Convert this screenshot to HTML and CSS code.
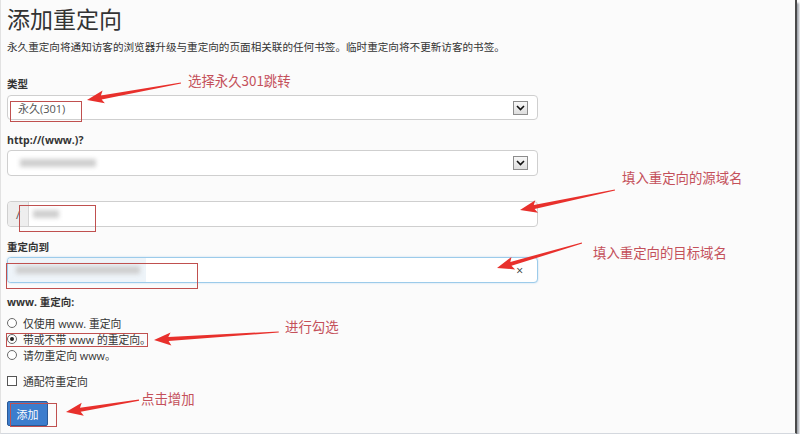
FILE: index.html
```html
<!DOCTYPE html>
<html lang="zh-CN">
<head>
<meta charset="utf-8">
<title>添加重定向</title>
<link rel="stylesheet" href="styles.css">
</head>
<body>
<div class="frame">
  <div class="page">
    <h1 class="title">添加重定向</h1>
    <p class="desc">永久重定向将通知访客的浏览器升级与重定向的页面相关联的任何书签。临时重定向将不更新访客的书签。</p>

    <div class="field f-type">
      <span class="lbl">类型</span>
      <div class="select s-type">
        <span class="val">永久(301)</span>
        <span class="dd"><svg width="9" height="6" viewBox="0 0 9 6"><path d="M1 1 L4.5 4.5 L8 1" fill="none" stroke="#111" stroke-width="1.6"/></svg></span>
      </div>
    </div>

    <div class="field f-domain">
      <span class="lbl">http://(www.)?</span>
      <div class="select s-domain">
        <span class="blur b-domain"></span>
        <span class="dd"><svg width="9" height="6" viewBox="0 0 9 6"><path d="M1 1 L4.5 4.5 L8 1" fill="none" stroke="#111" stroke-width="1.6"/></svg></span>
      </div>
    </div>

    <div class="input i-path">
      <span class="addon">/</span>
      <span class="blur b-path"></span>
    </div>

    <div class="field f-target">
      <span class="lbl">重定向到</span>
      <div class="input i-target">
        <span class="tint"><span class="blur b-target"></span></span>
        <span class="clear">×</span>
      </div>
    </div>

    <div class="field f-www">
      <span class="lbl">www. 重定向:</span>
      <div class="radios">
        <div class="opt"><span class="radio"></span>仅使用 www. 重定向</div>
        <div class="opt"><span class="radio on"></span>带或不带 www 的重定向。</div>
        <div class="opt"><span class="radio"></span>请勿重定向 www。</div>
      </div>
    </div>

    <div class="opt chk-row"><span class="check"></span>通配符重定向</div>

    <button class="btn">添加</button>
  </div>

  <svg class="arrows" width="796" height="434" viewBox="0 0 796 434">
    <g fill="#e8302c">
      <g transform="translate(87 100) rotate(-10.25)"><polygon points="0,0 17,-6.5 14.5,-2 95.5,-0.6 95.5,0.6 14.5,2 17,6.5"/></g>
      <g transform="translate(520 210) rotate(-11.9)"><polygon points="0,0 17,-6.5 14.5,-2 97,-0.6 97,0.6 14.5,2 17,6.5"/></g>
      <g transform="translate(497 268) rotate(-16.4)"><polygon points="0,0 17,-6.5 14.5,-2 88.6,-0.6 88.6,0.6 14.5,2 17,6.5"/></g>
      <g transform="translate(154 340) rotate(-3.66)"><polygon points="0,0 17,-6.5 14.5,-2 125,-0.6 125,0.6 14.5,2 17,6.5"/></g>
      <g transform="translate(66 412) rotate(-9.3)"><polygon points="0,0 17,-6.5 14.5,-2 74,-0.6 74,0.6 14.5,2 17,6.5"/></g>
    </g>
  </svg>

  <div class="note n1">选择永久301跳转</div>
  <div class="note n2">填入重定向的源域名</div>
  <div class="note n3">填入重定向的目标域名</div>
  <div class="note n4">进行勾选</div>
  <div class="note n5">点击增加</div>

  <div class="rbox r1"></div>
  <div class="rbox r2"></div>
  <div class="rbox r3"></div>
  <div class="rbox r4"></div>
  <div class="rbox r5"></div>
</div>
</body>
</html>
```

FILE: styles.css
```css
html, body {
  margin: 0;
  padding: 0;
  background: #ffffff;
}

body {
  font-family: "Open Sans", "Noto Sans CJK SC", sans-serif;
  color: #333333;
}

.frame {
  position: relative;
  width: 794px;
  height: 433px;
  background: #fbfbfb;
  border-left: 1px solid #e2e2e2;
  border-right: 2px solid #4a4a4a;
  border-bottom: 1px solid #d4d8de;
  box-shadow: 2px 3px 2px #9ea3ab;
  overflow: hidden;
}

.page {
  width: 531px;
  padding-left: 6px;
}

.title {
  margin: 0;
  padding-top: 4px;
  font-size: 23px;
  line-height: 30px;
  font-weight: normal;
  color: #333333;
}

.desc {
  margin: 6px 0 0;
  font-size: 10.6px;
  line-height: 14px;
  color: #333333;
}

.lbl {
  display: block;
  font-size: 10.5px;
  font-weight: bold;
  line-height: 14px;
  color: #333333;
}

.f-type { margin-top: 23px; }
.f-domain { margin-top: 13px; }
.f-target { margin-top: 13px; }
.f-www { margin-top: 12px; }

.select,
.input {
  box-sizing: border-box;
  display: flex;
  align-items: center;
  background: #ffffff;
  border: 1px solid #cfcfcf;
  border-radius: 4px;
}

.select {
  padding: 0 9px 0 10px;
}

.s-type {
  margin-top: 4px;
  height: 25px;
}

.s-domain {
  margin-top: 3px;
  height: 26px;
}

.val {
  font-size: 11px;
  color: #555555;
}

.dd {
  box-sizing: border-box;
  margin-left: auto;
  width: 15px;
  height: 14px;
  border: 1px solid #8c8c8c;
  background: linear-gradient(#f7f7f7, #dedede);
  display: flex;
  align-items: center;
  justify-content: center;
}

.blur {
  display: block;
  height: 8px;
  background: #cfcfcf;
  filter: blur(2px);
}

.b-domain {
  width: 76px;
  margin-left: 2px;
}

.i-path {
  margin-top: 25px;
  height: 26px;
}

.addon {
  box-sizing: border-box;
  align-self: stretch;
  width: 21px;
  background: #eeeeee;
  border-right: 1px solid #d6d6d6;
  border-radius: 4px 0 0 4px;
  font-size: 11px;
  color: #555555;
  display: flex;
  align-items: center;
  justify-content: center;
}

.b-path {
  width: 26px;
  margin-left: 4px;
}

.i-target {
  margin-top: 3px;
  height: 26px;
  border-color: #9ccbea;
  box-shadow: 0 0 2px rgba(102, 175, 233, 0.45);
  padding-right: 14px;
}

.tint {
  align-self: stretch;
  width: 138px;
  background: #eef4f9;
  display: flex;
  align-items: center;
  border-radius: 3px 0 0 3px;
}

.b-target {
  width: 124px;
  margin-left: 8px;
}

.clear {
  margin-left: auto;
  font-size: 12px;
  color: #333333;
}

.radios {
  margin-top: 6px;
}

.opt {
  display: flex;
  align-items: center;
  height: 16px;
  font-size: 10.8px;
  color: #333333;
}

.radio {
  box-sizing: border-box;
  width: 10px;
  height: 10px;
  border: 1px solid #6a6a6a;
  border-radius: 50%;
  background: #ffffff;
  margin-right: 6px;
  display: flex;
  align-items: center;
  justify-content: center;
}

.radio.on::after {
  content: "";
  width: 4px;
  height: 4px;
  border-radius: 50%;
  background: #222222;
}

.chk-row {
  margin-top: 10px;
}

.check {
  box-sizing: border-box;
  width: 10px;
  height: 10px;
  border: 1px solid #555555;
  background: #ffffff;
  margin-right: 6px;
}

.btn {
  display: block;
  margin-top: 12px;
  width: 41px;
  height: 25px;
  padding: 0;
  background: #3c7dcd;
  border: 1px solid #2b5996;
  border-radius: 2px;
  color: #ffffff;
  font-family: "Open Sans", "Noto Sans CJK SC", sans-serif;
  font-size: 11px;
}

.arrows {
  position: absolute;
  left: -1px;
  top: 0;
  pointer-events: none;
}

.note {
  position: absolute;
  font-family: "Noto Sans CJK SC", sans-serif;
  font-size: 13.4px;
  line-height: 16px;
  color: #c4505a;
  white-space: nowrap;
}

.n1 { left: 187px; top: 72px; }
.n2 { left: 621px; top: 169px; }
.n3 { left: 592px; top: 244px; }
.n4 { left: 284px; top: 318px; }
.n5 { left: 140px; top: 390px; }

.rbox {
  position: absolute;
  border: 1px solid #c0504f;
  box-sizing: border-box;
}

.r1 { left: 9px; top: 101px; width: 72px; height: 21px; }
.r2 { left: 18px; top: 205px; width: 77px; height: 27px; }
.r3 { left: 5px; top: 263px; width: 192px; height: 26px; }
.r4 { left: 5px; top: 333px; width: 142px; height: 14px; }
.r5 { left: 9px; top: 403px; width: 47px; height: 24px; }
```
